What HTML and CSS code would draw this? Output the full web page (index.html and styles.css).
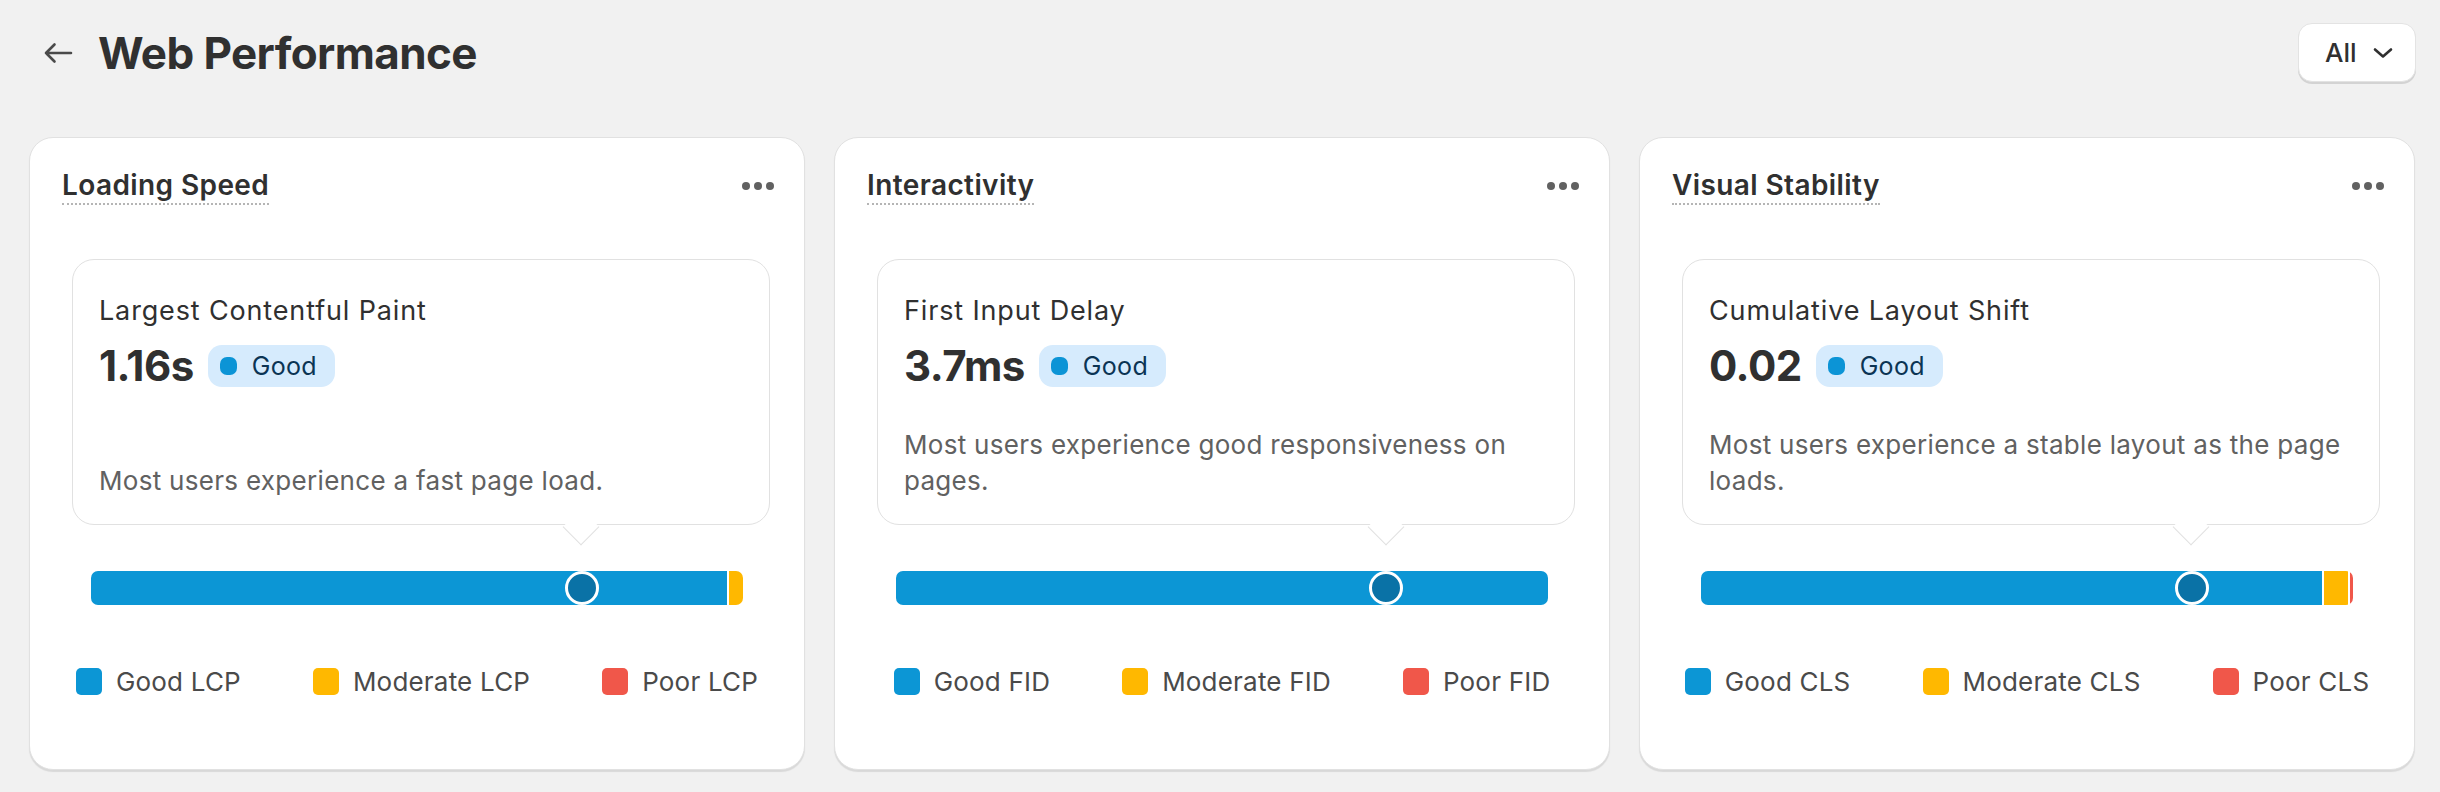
FILE: index.html
```html
<!DOCTYPE html>
<html lang="en">
<head>
<meta charset="utf-8">
<title>Web Performance</title>
<link rel="stylesheet" href="styles.css">
</head>
<body>
<div class="page">
  <header class="page-header">
    <div class="title-wrap">
      <svg class="back" width="30" height="22" viewBox="0 0 30 22"><path d="M28 11H3M11.5 2.5L3 11l8.5 8.5" fill="none" stroke="#4a4a4a" stroke-width="2.6" stroke-linecap="round" stroke-linejoin="round"/></svg>
      <h1 class="page-title">Web Performance</h1>
    </div>
    <button class="select-btn">All
      <svg width="22" height="14" viewBox="0 0 22 14"><path d="M3 3.5l8 7 8-7" fill="none" stroke="#303030" stroke-width="2.6" stroke-linecap="round" stroke-linejoin="round"/></svg>
    </button>
  </header>

  <main class="cards">
    <section class="card" style="--p:0.753">
      <div class="card-head">
        <h2 class="card-title"><span>Loading Speed</span></h2>
        <span class="more"><i></i><i></i><i></i></span>
      </div>
      <div class="metric">
        <div class="metric-name">Largest Contentful Paint</div>
        <div class="metric-value"><span class="num">1.16s</span><span class="badge"><b></b>Good</span></div>
        <p class="metric-desc">Most users experience a fast page load.</p>
        <span class="pointer"></span>
      </div>
      <div class="bar">
        <div class="track">
          <span class="seg good" style="width:97.5%"></span>
          <span class="seg moderate" style="flex:1"></span>
        </div>
        <span class="marker"></span>
      </div>
      <ul class="legend">
        <li><span class="sw good"></span>Good LCP</li>
        <li><span class="sw moderate"></span>Moderate LCP</li>
        <li><span class="sw poor"></span>Poor LCP</li>
      </ul>
    </section>

    <section class="card" style="--p:0.752">
      <div class="card-head">
        <h2 class="card-title"><span>Interactivity</span></h2>
        <span class="more"><i></i><i></i><i></i></span>
      </div>
      <div class="metric">
        <div class="metric-name">First Input Delay</div>
        <div class="metric-value"><span class="num">3.7ms</span><span class="badge"><b></b>Good</span></div>
        <p class="metric-desc">Most users experience good responsiveness on pages.</p>
        <span class="pointer"></span>
      </div>
      <div class="bar">
        <div class="track">
          <span class="seg good" style="flex:1"></span>
        </div>
        <span class="marker"></span>
      </div>
      <ul class="legend">
        <li><span class="sw good"></span>Good FID</li>
        <li><span class="sw moderate"></span>Moderate FID</li>
        <li><span class="sw poor"></span>Poor FID</li>
      </ul>
    </section>

    <section class="card" style="--p:0.753">
      <div class="card-head">
        <h2 class="card-title"><span>Visual Stability</span></h2>
        <span class="more"><i></i><i></i><i></i></span>
      </div>
      <div class="metric">
        <div class="metric-name">Cumulative Layout Shift</div>
        <div class="metric-value"><span class="num">0.02</span><span class="badge"><b></b>Good</span></div>
        <p class="metric-desc">Most users experience a stable layout as the page loads.</p>
        <span class="pointer"></span>
      </div>
      <div class="bar">
        <div class="track">
          <span class="seg good" style="width:95.3%"></span>
          <span class="seg moderate" style="width:3.7%"></span>
          <span class="seg poor" style="flex:1"></span>
        </div>
        <span class="marker"></span>
      </div>
      <ul class="legend">
        <li><span class="sw good"></span>Good CLS</li>
        <li><span class="sw moderate"></span>Moderate CLS</li>
        <li><span class="sw poor"></span>Poor CLS</li>
      </ul>
    </section>
  </main>
</div>
</body>
</html>
```

FILE: styles.css
```css
* { box-sizing: border-box; }
html, body { margin: 0; padding: 0; }
body {
  background: #f1f1f1;
  font-family: Inter, "Noto Sans", "Liberation Sans", sans-serif;
  color: #303030;
  width: 2440px;
  height: 792px;
  overflow: hidden;
}

.page-header {
  display: flex;
  align-items: center;
  justify-content: space-between;
  padding: 23px 24px 0 43px;
  height: 82px;
  margin-bottom: 55px;
}
.title-wrap { display: flex; align-items: center; gap: 25px; }
.back { display: block; }
.page-title {
  margin: 0;
  font-size: 44px;
  line-height: 56px;
  font-weight: 700;
  letter-spacing: -0.6px;
  color: #303030;
}
.select-btn {
  display: flex;
  align-items: center;
  gap: 15px;
  height: 59px;
  width: 118px;
  padding: 0 0 0 26px;
  background: #fff;
  border: 1px solid #e3e3e3;
  border-radius: 14px;
  box-shadow: 0 2px 0 rgba(0,0,0,0.12);
  font-family: inherit;
  font-size: 26px;
  font-weight: 500;
  color: #303030;
}
.select-btn svg { display: block; }

.cards {
  display: grid;
  grid-template-columns: repeat(3, 1fr);
  gap: 29px;
  padding: 0 25px 0 29px;
}
.card {
  background: #fff;
  border: 1px solid #e1e1e1;
  border-radius: 24px;
  box-shadow: 0 2px 1px rgba(0,0,0,0.10);
  padding-bottom: 74px;
}
.card-head {
  display: flex;
  align-items: center;
  justify-content: space-between;
  padding: 29px 30px 0 32px;
}
.card-title {
  margin: 0;
  font-size: 28px;
  line-height: 36px;
  font-weight: 600;
  letter-spacing: 0.4px;
  color: #303030;
}
.card-title span {
  display: inline-block;
  border-bottom: 2px dotted #b5b5b5;
}
.more { display: flex; gap: 4px; }
.more i {
  display: block;
  width: 8px;
  height: 8px;
  border-radius: 50%;
  background: #616161;
}

.metric {
  position: relative;
  display: flex;
  flex-direction: column;
  height: 266px;
  margin: 54px 34px 0 42px;
  padding: 33px 24px 25px 26px;
  border: 1.5px solid #e1e1e1;
  border-radius: 22px;
  background: #fff;
}
.metric-name {
  font-size: 27px;
  line-height: 36px;
  letter-spacing: 0.85px;
  color: #303030;
}
.metric-value {
  display: flex;
  align-items: center;
  gap: 14px;
  margin-top: 13px;
  height: 48px;
}
.num {
  font-size: 42px;
  line-height: 48px;
  font-weight: 700;
  letter-spacing: -0.5px;
  color: #303030;
}
.badge {
  display: flex;
  align-items: center;
  gap: 15px;
  height: 42px;
  padding: 0 18px 0 12px;
  border-radius: 14px;
  background: #d6ebfd;
  color: #0b3454;
  font-size: 25px;
  letter-spacing: 0.3px;
}
.badge b {
  display: block;
  width: 17px;
  height: 18px;
  border-radius: 7px;
  background: #0c94d6;
}
.metric-desc {
  margin: auto 0 0 0;
  font-size: 26px;
  line-height: 36px;
  letter-spacing: 0.3px;
  color: #616161;
}
.pointer {
  position: absolute;
  width: 26px;
  height: 26px;
  bottom: -16px;
  left: calc(18px + (100% - 45px) * var(--p) - 13px);
  background: #fff;
  border-right: 1.5px solid #e1e1e1;
  border-bottom: 1.5px solid #e1e1e1;
  transform: rotate(45deg);
}

.bar {
  position: relative;
  height: 34px;
  margin: 46px 61px 0 61px;
}
.track {
  display: flex;
  gap: 2px;
  height: 100%;
  border-radius: 7px;
  overflow: hidden;
}
.seg { display: block; height: 100%; }
.good { background: #0c96d5; }
.moderate { background: #ffb800; }
.poor { background: #f0574a; }
.marker {
  position: absolute;
  top: 0;
  left: calc(100% * var(--p) - 17px);
  width: 34px;
  height: 34px;
  border-radius: 50%;
  background: #0a72a6;
  border: 3.5px solid #fff;
}

.legend {
  list-style: none;
  margin: 63px 0 0 0;
  padding: 0;
  display: flex;
  justify-content: center;
  gap: 72px;
}
.legend li {
  display: flex;
  align-items: center;
  gap: 14px;
  font-size: 26px;
  line-height: 27px;
  letter-spacing: 0.2px;
  color: #4a4a4a;
  white-space: nowrap;
}
.sw {
  display: block;
  width: 26px;
  height: 27px;
  border-radius: 5px;
}
```
